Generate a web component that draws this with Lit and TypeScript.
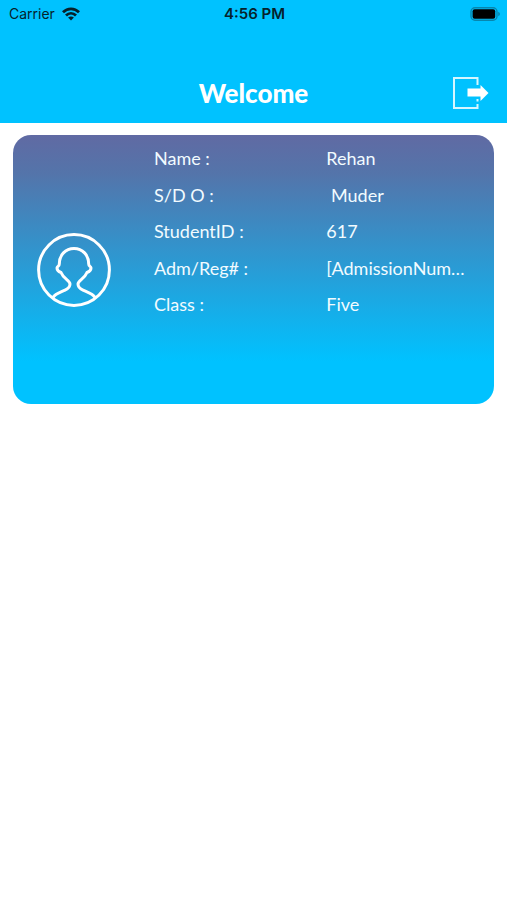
import { LitElement, html, css } from "lit";
import { customElement, property } from "lit/decorators.js";

interface Field {
  label: string;
  value: string;
}

@customElement("status-bar")
class StatusBar extends LitElement {
  static styles = css`
    :host {
      display: grid;
      grid-template-columns: 1fr auto 1fr;
      align-items: center;
      height: 28px;
      padding: 0 7px 0 9px;
      font: 14px/20px Inter, "Liberation Sans", sans-serif;
      color: #06222c;
    }
    .carrier {
      display: flex;
      align-items: center;
      gap: 7px;
    }
    .time {
      font-size: 15px;
      font-weight: 600;
    }
    .battery {
      justify-self: end;
    }
    svg {
      display: block;
    }
  `;

  render() {
    return html`
      <div class="carrier">
        <span>Carrier</span>
        <svg width="18" height="14" viewBox="0 0 18 14" aria-label="Wi-Fi" role="img">
          <g fill="none" stroke="#06222c" stroke-width="2.8">
            <path d="M1 5.2C5.5 0.7 12.5 0.7 17 5.2" />
            <path d="M4 8.5C6.9 5.6 11.1 5.6 14 8.5" />
          </g>
          <path d="M6.1 10.5C7.8 9 10.2 9 11.9 10.5L9 13.6Z" fill="#06222c" />
        </svg>
      </div>
      <span class="time">4:56 PM</span>
      <svg class="battery" width="30" height="14" viewBox="0 0 30 14" aria-label="Battery full" role="img">
        <rect x="1" y="0.7" width="26" height="12.6" rx="4" fill="none" stroke="#0786ae" stroke-width="1.4" />
        <rect x="2.6" y="2.2" width="22.6" height="9.6" rx="2" fill="#000" />
        <path d="M28.2 4.8Q30 5.6 30 7T28.2 9.2Z" fill="#0786ae" />
      </svg>
    `;
  }
}

@customElement("student-card")
class StudentCard extends LitElement {
  @property({ attribute: false }) fields: Field[] = [];

  static styles = css`
    :host {
      display: flex;
      align-items: center;
      gap: 43px;
      box-sizing: border-box;
      min-height: 269px;
      padding: 13px 24px;
      border-radius: 18px;
      background: linear-gradient(#606aa3 0%, #5474aa 14%, #00c2ff 84%);
      color: #f2fbff;
      font: 18px/20px Lato, "Open Sans", sans-serif;
    }
    .avatar {
      flex: none;
      width: 74px;
      height: 74px;
    }
    .fields {
      flex: 1;
      min-width: 0;
      align-self: flex-start;
      display: flex;
      flex-direction: column;
      justify-content: space-between;
      min-height: 166px;
      margin: 0;
    }
    .row {
      display: grid;
      grid-template-columns: minmax(0, 6fr) minmax(0, 5fr);
    }
    dt,
    dd {
      margin: 0;
      white-space: pre;
    }
  `;

  render() {
    return html`
      <svg class="avatar" viewBox="0 0 74 74" fill="none" stroke="#fff" stroke-width="3" stroke-linejoin="round" aria-hidden="true">
        <circle cx="37" cy="37" r="35.4" />
        <path
          d="M16 64.5C18 61 23 59.500 28 57.200C31.500 55.600 33 54 33 51C33 47.500 26.500 46 24 39.500C21 38.500 20 36.500 20 35C20.200 33.300 22.300 33.500 22.300 31C22.300 22 28.500 15.500 37 15.500S51.700 22 51.700 31C51.700 33.500 53.800 33.300 54 35C54 36.500 53 38.500 50 39.500C47.500 46 41 47.500 41 51C41 54 42.500 55.600 46 57.200C51 59.500 56 61 58 64.500"
        />
      </svg>
      <dl class="fields">
        ${this.fields.map(
          (f) => html`<div class="row"><dt>${f.label}</dt><dd>${f.value}</dd></div>`
        )}
      </dl>
    `;
  }
}

@customElement("app-root")
class AppRoot extends LitElement {
  private fields: Field[] = [
    { label: "Name :", value: "Rehan" },
    { label: "S/D O :", value: " Muder" },
    { label: "StudentID :", value: "617" },
    { label: "Adm/Reg# :", value: "[AdmissionNum…" },
    { label: "Class :", value: "Five" },
  ];

  static styles = css`
    :host {
      display: block;
      min-height: 100vh;
      background: #fff;
    }
    .top {
      background: #00c2ff;
    }
    .nav {
      display: grid;
      grid-template-columns: 1fr auto 1fr;
      align-items: center;
      height: 60px;
      padding: 35px 18px 0;
    }
    h1 {
      grid-column: 2;
      margin: 0;
      color: #fff;
      font: 900 26px/32px Lato, "Open Sans", sans-serif;
    }
    .logout {
      justify-self: end;
      padding: 0;
      border: 0;
      background: none;
      cursor: pointer;
    }
    .logout svg {
      display: block;
    }
    main {
      padding: 12px 13px;
    }
  `;

  render() {
    return html`
      <header class="top">
        <status-bar></status-bar>
        <div class="nav">
          <h1>Welcome</h1>
          <button class="logout" type="button" aria-label="Log out">
            <svg width="37" height="34" viewBox="0 0 37 34">
              <path d="M25.500 9V2H2V32H25.500V28M25.500 25.500V23" fill="none" stroke="#d5f6ff" stroke-width="2" />
              <path d="M15.500 12.500H28.500V9L36.500 17L28.500 25V20.500H15.500Z" fill="#fff" />
            </svg>
          </button>
        </div>
      </header>
      <main>
        <student-card .fields=${this.fields}></student-card>
      </main>
    `;
  }
}
